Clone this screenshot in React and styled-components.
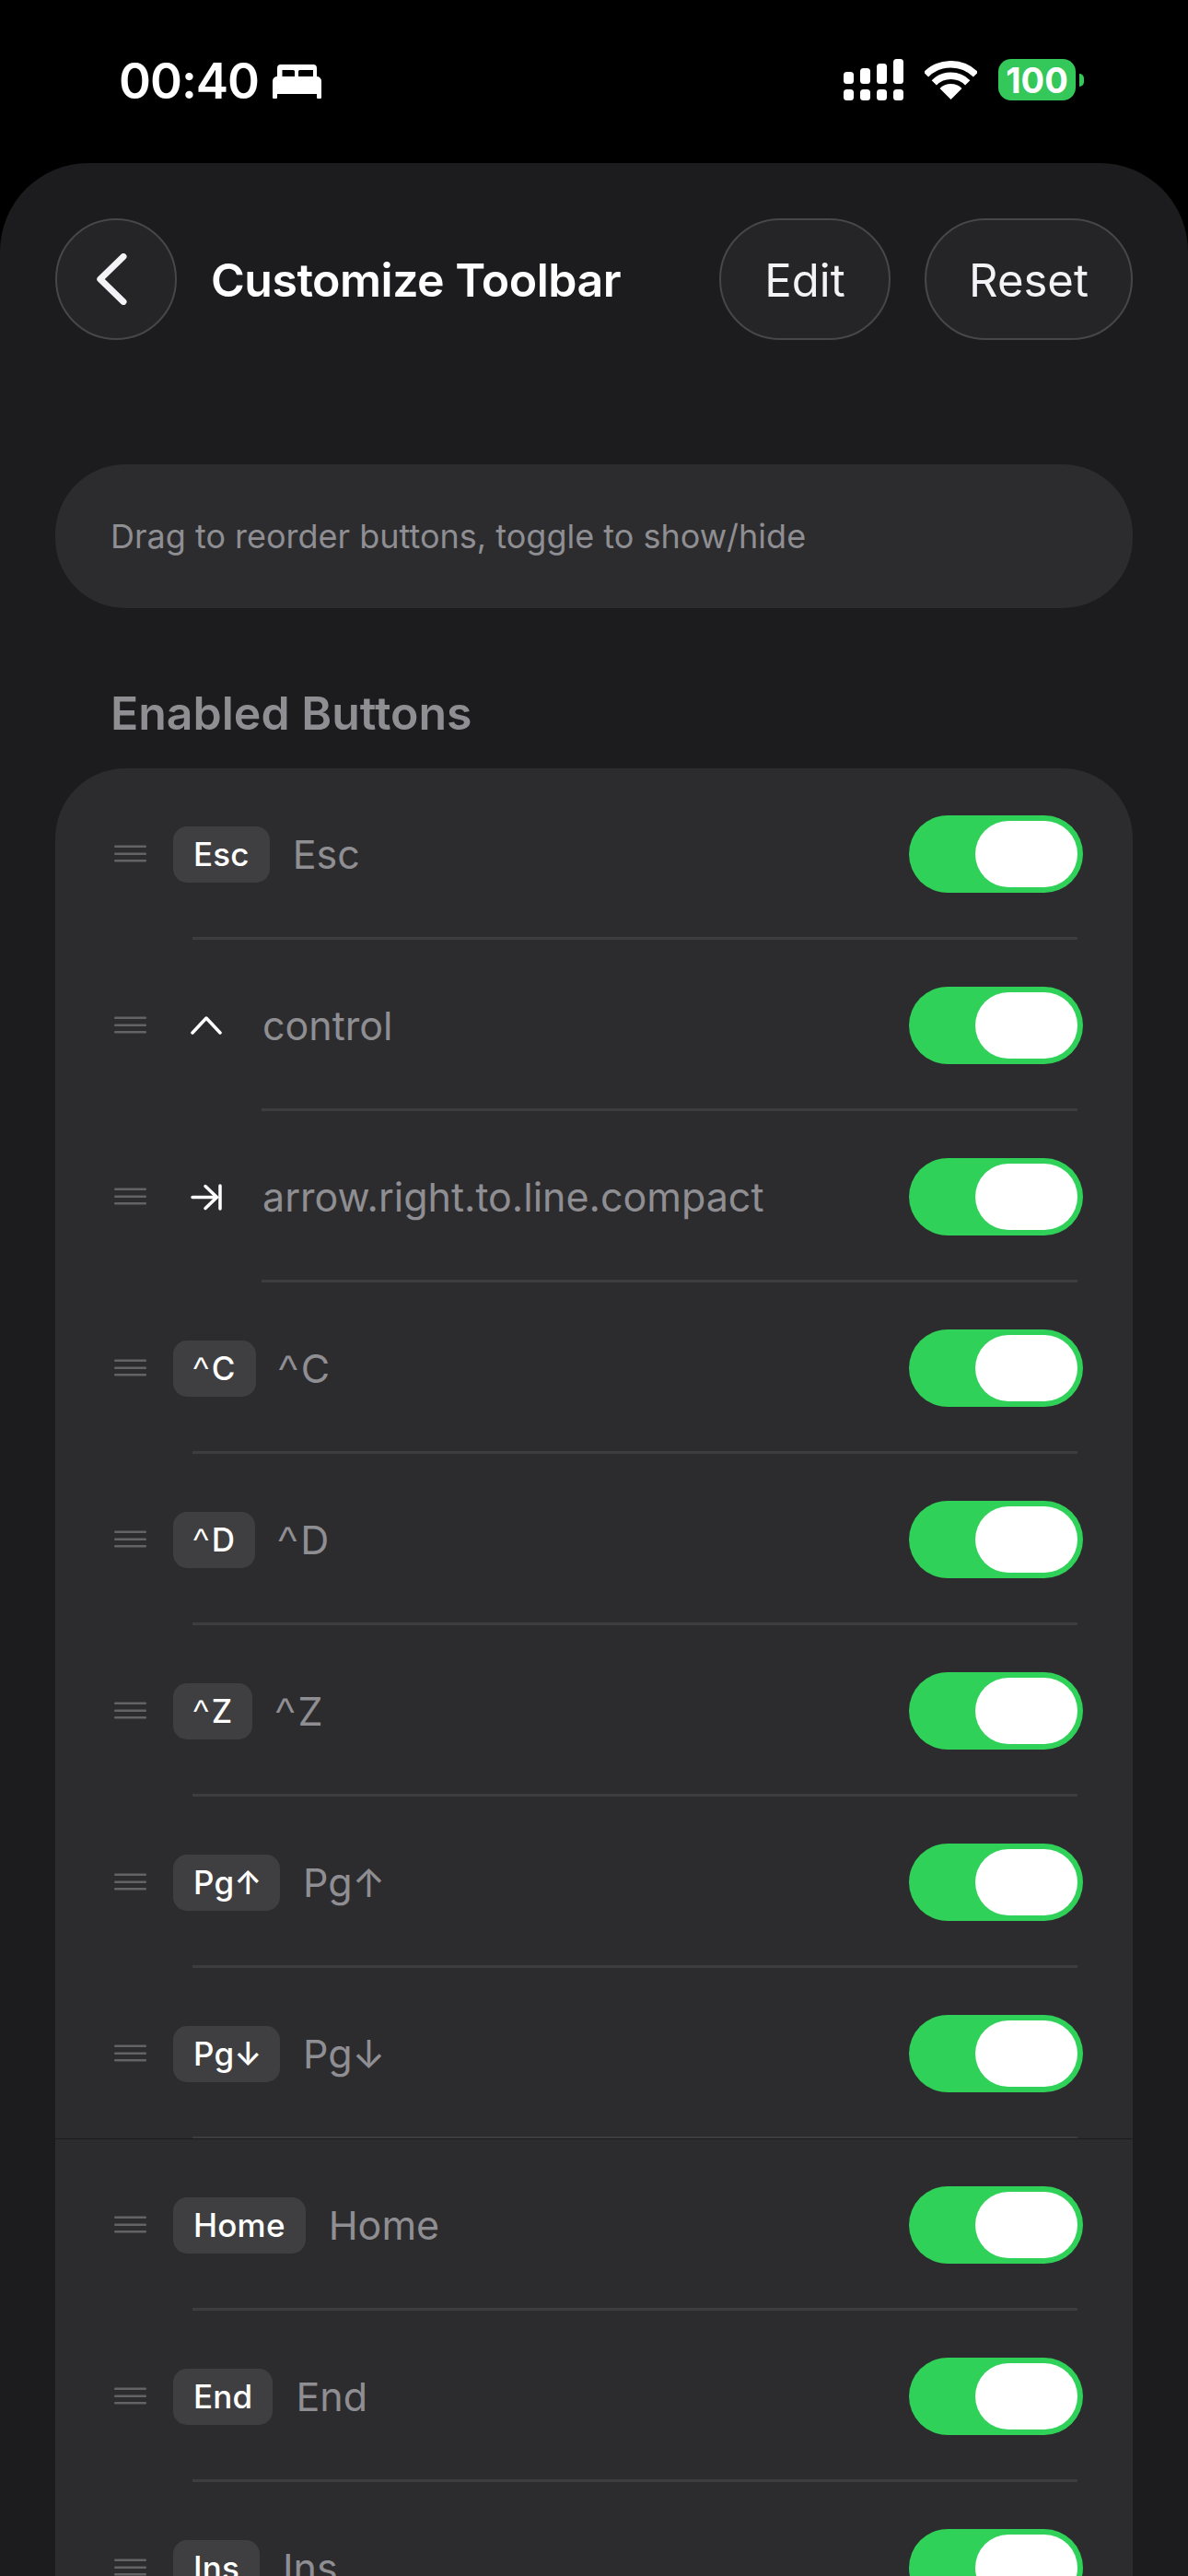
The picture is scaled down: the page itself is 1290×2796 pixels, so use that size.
import React from "react";
import styled, { createGlobalStyle } from "styled-components";

const Global = createGlobalStyle`
  html, body { margin: 0; padding: 0; background: #000; }
  #root { width: 1290px; height: 2796px; overflow: hidden; }
  * { box-sizing: border-box; }
`;

const Screen = styled.div`
  width: 1290px;
  height: 2796px;
  overflow: hidden;
  background: #000;
  font-family: Inter, "Liberation Sans", sans-serif;
  color: #fff;
`;

const StatusBar = styled.div`
  height: 177px;
  padding: 0 113px 4px 129px;
  display: flex;
  align-items: center;
  justify-content: space-between;
`;

const StatusLeft = styled.div`
  display: flex;
  align-items: center;
  gap: 15px;
  padding-top: 4px;
`;

const Time = styled.span`
  font-size: 53px;
  font-weight: 600;
  line-height: 1;
  letter-spacing: -1px;
`;

const StatusRight = styled.div`
  display: flex;
  align-items: center;
  gap: 23px;
`;

const Battery = styled.div`
  display: flex;
  align-items: center;
  gap: 4px;
`;

const BatteryBody = styled.div`
  width: 84px;
  height: 45px;
  border-radius: 14px;
  background: #34c759;
  display: flex;
  align-items: center;
  justify-content: center;
  font-size: 38px;
  font-weight: 700;
  line-height: 1;
  color: #fff;
`;

const BatteryTip = styled.div`
  width: 5px;
  height: 14px;
  border-radius: 0 5px 5px 0;
  background: #34c759;
`;

const Sheet = styled.div`
  background: #1c1c1e;
  border-radius: 96px 96px 0 0;
  padding: 60px 60px 0;
  min-height: 2619px;
`;

const Header = styled.header`
  display: flex;
  align-items: center;
  height: 131px;
`;

const BackButton = styled.button`
  width: 132px;
  height: 132px;
  padding: 0 9px 0 0;
  border-radius: 50%;
  border: 2px solid #47474a;
  background: #252527;
  display: flex;
  align-items: center;
  justify-content: center;
`;

const Title = styled.h1`
  margin: 0 0 0 37px;
  padding-top: 2px;
  flex: 1;
  font-size: 50px;
  font-weight: 600;
  line-height: 1;
  letter-spacing: -0.5px;
  color: #fff;
`;

const Actions = styled.div`
  display: flex;
  gap: 37px;
`;

const PillButton = styled.button`
  height: 132px;
  width: ${(p) => p.$width}px;
  padding: 3px 0 0;
  border-radius: 66px;
  border: 2px solid #47474a;
  background: #252527;
  font-family: inherit;
  font-size: 49px;
  font-weight: 400;
  color: #f2f2f7;
`;

const InfoCard = styled.div`
  margin-top: 136px;
  height: 156px;
  border-radius: 76px;
  background: #2c2c2e;
  padding: 0 60px;
  display: flex;
  align-items: center;
  font-size: 36px;
  color: #8e8e93;
`;

const SectionTitle = styled.h2`
  margin: 0;
  padding: 85px 0 0 60px;
  height: 174px;
  font-size: 50px;
  line-height: 58px;
  font-weight: 600;
  color: #8e8e93;
`;

const Card = styled.div`
  background: #2c2c2e;
  border-radius: 76px 76px 0 0;
`;

const Row = styled.div`
  position: relative;
  height: 183px;
  padding: 3px 54px 0 64px;
  display: flex;
  align-items: center;
`;

const Divider = styled.div`
  height: 3px;
  margin: 0 60px 0 ${(p) => p.$inset}px;
  background: #3d3d3f;
`;

const Seam = styled.div`
  height: 1px;
  margin-top: -1px;
  position: relative;
  background: #1c1c1e;
`;

const Handle = styled.svg`
  width: 35px;
  height: 20px;
  margin-right: 29px;
  flex: none;
`;

const Badge = styled.span`
  height: 61px;
  padding: 0 22px;
  border-radius: 15px;
  background: #3f3f41;
  display: flex;
  align-items: center;
  font-size: 35px;
  font-weight: 450;
  letter-spacing: 0.2px;
  color: #fff;
  white-space: nowrap;
`;

const IconSlot = styled.span`
  width: 72px;
  display: flex;
  align-items: center;
  justify-content: center;
`;

const Label = styled.span`
  margin-left: 25px;
  flex: 1;
  font-size: 43px;
  font-weight: 400;
  color: #8e8e93;
  white-space: pre;
`;

const CaretGlyph = styled.span`
  font-family: "Liberation Sans", sans-serif;
  font-weight: 400;
  margin-right: 0.09em;
`;

const ArrowGlyph = styled.span`
  letter-spacing: -0.07em;
`;

const Toggle = styled.div`
  width: 189px;
  height: 84px;
  padding: 6px;
  border-radius: 42px;
  background: #30d158;
  display: flex;
  justify-content: flex-end;
  flex: none;
`;

const Knob = styled.div`
  width: 111px;
  height: 72px;
  border-radius: 36px;
  background: #fff;
`;

const Bed = () => (
  <svg width="53" height="37" viewBox="0 0 53 37" fill="#fff">
    <path
      fillRule="evenodd"
      d="M9 0h35a4 4 0 0 1 4 4v9H5V4a4 4 0 0 1 4-4ZM10.500 6v7H24V7.500a1.500 1.500 0 0 0-1.500-1.500ZM28 7.500V13h16V6H29.500A1.500 1.500 0 0 0 28 7.500Z"
    />
    <path d="M5 13h43a5 5 0 0 1 5 5v18a1 1 0 0 1-1 1h-3a1 1 0 0 1-1-1v-4H5v4a1 1 0 0 1-1 1H1a1 1 0 0 1-1-1V18a5 5 0 0 1 5-5Z" />
  </svg>
);

const Signal = () => (
  <svg width="65" height="45" viewBox="0 0 65 45" fill="#fff">
    <rect x="0" y="14" width="11" height="13" rx="3.500" />
    <rect x="18" y="10" width="11" height="17" rx="3.500" />
    <rect x="36" y="5" width="11" height="22" rx="3.500" />
    <rect x="54" y="0" width="11" height="27" rx="3.500" />
    <rect x="0" y="33" width="11" height="12" rx="3.500" />
    <rect x="18" y="33" width="11" height="12" rx="3.500" />
    <rect x="36" y="33" width="11" height="12" rx="3.500" />
    <rect x="54" y="33" width="11" height="12" rx="3.500" />
  </svg>
);

const Wifi = () => (
  <svg width="57" height="42" viewBox="0 0 57 42" fill="none" stroke="#fff" strokeWidth="7.500">
    <path d="M1.450 14.950A38.250 38.250 0 0 1 55.550 14.950" />
    <path d="M10.300 23.800A25.750 25.750 0 0 1 46.700 23.800" />
    <path d="M28.500 42L16.480 29.980A17 17 0 0 1 40.520 29.980Z" fill="#fff" stroke="none" />
  </svg>
);

const BackChevron = () => (
  <svg width="33" height="56" viewBox="0 0 33 56" fill="none" stroke="#f2f2f7" strokeWidth="7" strokeLinecap="round" strokeLinejoin="round">
    <path d="M29 3.500L3.800 28L29 52.500" />
  </svg>
);

const CaretIcon = () => (
  <svg width="34" height="20" viewBox="0 0 34 20" fill="none" stroke="#fff" strokeWidth="3.500" strokeLinecap="round" strokeLinejoin="round">
    <path d="M2 18L17 2L32 18" />
  </svg>
);

const ArrowLineIcon = () => (
  <svg width="34" height="29" viewBox="0 0 34 29" fill="none" stroke="#fff" strokeWidth="3.500" strokeLinecap="round" strokeLinejoin="round">
    <path d="M2 14.500H28M16 2.500L28.500 14.500L16 26.500M32 2V27" />
  </svg>
);

const DragHandle = () => (
  <Handle viewBox="0 0 35 20" fill="#636366">
    <rect x="0" y="0.500" width="35" height="2.500" rx="1.250" />
    <rect x="0" y="8.500" width="35" height="2.500" rx="1.250" />
    <rect x="0" y="16" width="35" height="2.500" rx="1.250" />
  </Handle>
);

const KeyText = ({ text }) => {
  if (text[0] === "^") {
    return (
      <span>
        <CaretGlyph>^</CaretGlyph>
        {text.slice(1)}
      </span>
    );
  }
  if (text.startsWith("Pg")) {
    return (
      <span>
        Pg<ArrowGlyph>{text.slice(2)}</ArrowGlyph>
      </span>
    );
  }
  return <span>{text}</span>;
};

const rows = [
  { badge: "Esc", inset: 149 },
  { icon: <CaretIcon />, label: "control", inset: 224 },
  { icon: <ArrowLineIcon />, label: "arrow.right.to.line.compact", inset: 224 },
  { badge: "^C", inset: 149 },
  { badge: "^D", inset: 149 },
  { badge: "^Z", inset: 149 },
  { badge: "Pg↑", inset: 149 },
  { badge: "Pg↓", inset: 149, seam: true },
  { badge: "Home", inset: 149 },
  { badge: "End", inset: 149 },
  { badge: "Ins", inset: 149 },
];

export default function App() {
  return (
    <Screen>
      <Global />
      <StatusBar>
        <StatusLeft>
          <Time>00:40</Time>
          <Bed />
        </StatusLeft>
        <StatusRight>
          <Signal />
          <Wifi />
          <Battery>
            <BatteryBody>100</BatteryBody>
            <BatteryTip />
          </Battery>
        </StatusRight>
      </StatusBar>
      <Sheet>
        <Header>
          <BackButton aria-label="Back">
            <BackChevron />
          </BackButton>
          <Title>Customize Toolbar</Title>
          <Actions>
            <PillButton $width={186}>Edit</PillButton>
            <PillButton $width={226}>Reset</PillButton>
          </Actions>
        </Header>
        <InfoCard>Drag to reorder buttons, toggle to show/hide</InfoCard>
        <SectionTitle>Enabled Buttons</SectionTitle>
        <Card>
          {rows.map((r) => (
            <React.Fragment key={r.badge || r.label}>
              <Row>
                <DragHandle />
                {r.badge ? (
                  <Badge>
                    <KeyText text={r.badge} />
                  </Badge>
                ) : (
                  <IconSlot>{r.icon}</IconSlot>
                )}
                <Label>
                  <KeyText text={r.label || r.badge} />
                </Label>
                <Toggle>
                  <Knob />
                </Toggle>
              </Row>
              <Divider $inset={r.inset} />
              {r.seam && <Seam />}
            </React.Fragment>
          ))}
        </Card>
      </Sheet>
    </Screen>
  );
}
